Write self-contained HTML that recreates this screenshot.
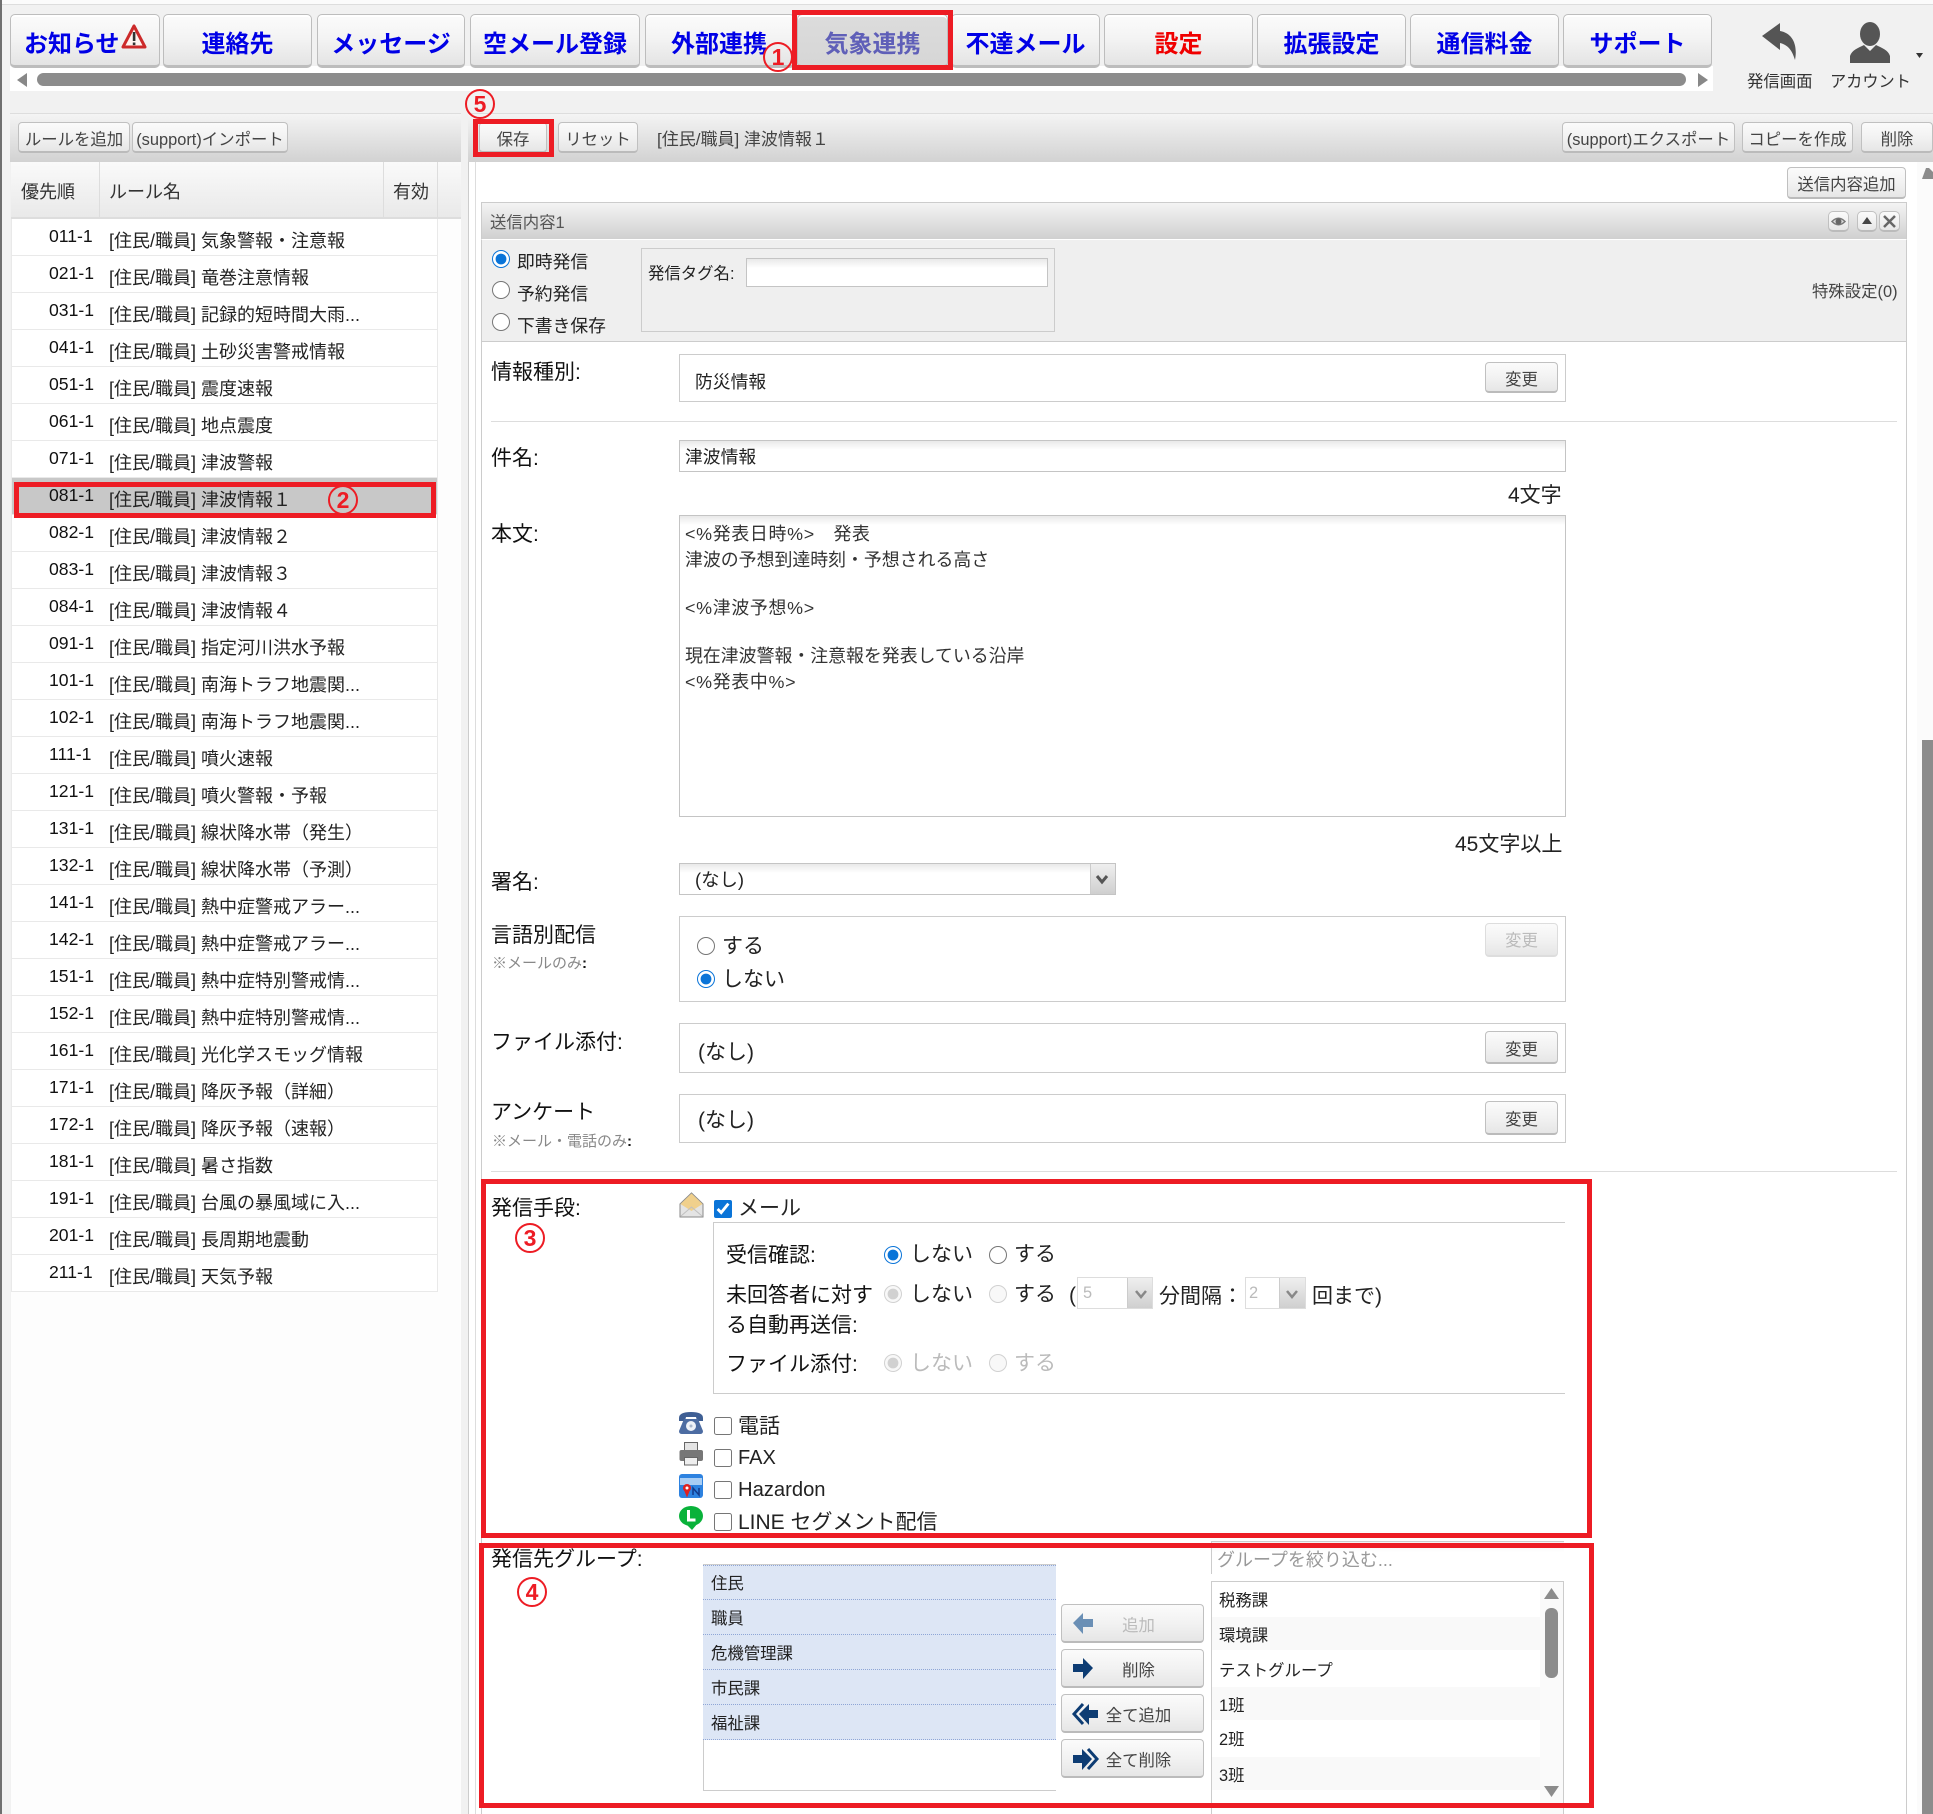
<!DOCTYPE html>
<html lang="ja">
<head>
<meta charset="utf-8">
<title>気象連携</title>
<style>
html,body{margin:0;padding:0;}
body{position:relative;width:1933px;height:1814px;overflow:hidden;background:#f1f1f1;font-family:"Liberation Sans","Noto Sans CJK JP",sans-serif;color:#222;}
div,span,input{box-sizing:border-box;}
.a{position:absolute;}
.t{position:absolute;white-space:nowrap;line-height:1;}
.nav{position:absolute;top:14px;height:54px;border:1px solid #bdbdbd;border-bottom:3px solid #bdbdbd;border-radius:5px;background:linear-gradient(#fbfbfb,#f4f4f4 45%,#e4e4e4);color:#0000e6;font-weight:700;font-size:24px;text-align:center;line-height:59px;white-space:nowrap;box-shadow:inset 0 2px 0 #fff;}
.b{position:absolute;border:1px solid #c0c0c0;border-bottom:2px solid #bbb;border-radius:4px;background:linear-gradient(#fbfbfb,#f2f2f2 50%,#e6e6e6);color:#444;font-size:16.4px;text-align:center;white-space:nowrap;padding-top:2.5px;}
.row{position:absolute;left:11px;width:426px;height:37px;border-bottom:1px solid #e9e9e9;background:#fff;}
.n{position:absolute;left:38px;top:8px;font-size:17.6px;line-height:18px;color:#111;}
.m{position:absolute;left:98px;top:13px;font-size:18px;line-height:18px;white-space:nowrap;color:#222;}
.box{position:absolute;border:1px solid #ccc;background:#fff;}
.inp{position:absolute;border:1px solid #c4c4c4;background:linear-gradient(#e9e9e9,#fff 9px);}
.red{position:absolute;border:5px solid #ed1c24;z-index:5;}
.c{position:absolute;z-index:6;width:30px;height:30px;border:2px solid #ed1c24;border-radius:50%;color:#ed1c24;font-weight:700;font-size:23px;line-height:26px;text-align:center;}
.l{position:absolute;white-space:nowrap;line-height:1;font-size:21px;color:#111;left:491px;}
.s{position:absolute;white-space:nowrap;line-height:1;font-size:15px;color:#888;left:492px;}
.s b{color:#111;}
input{position:absolute;margin:0;width:18px;height:18px;accent-color:#0a74d8;}
.g{position:absolute;left:703px;width:353px;height:35px;background:#dde6f5;border-bottom:1px dotted #8fa6d6;font-size:16.4px;line-height:38px;padding-left:8px;color:#222;}
.gr{position:absolute;left:1212px;width:328px;height:33px;font-size:16.4px;line-height:33px;padding-left:7px;color:#222;white-space:nowrap;}
.dd{position:absolute;top:0;bottom:0;background:linear-gradient(#efefef,#cfcfcf);border-left:1px solid #ccc;}
.k{letter-spacing:.7px;}
</style>
</head>
<body>
<div class="a" style="left:0;top:0;width:1933px;height:5px;background:#fbfbfb;border-bottom:1px solid #ddd"></div>
<div class="a" style="left:0;top:0;width:2px;height:1814px;background:#6f6f6f;z-index:3"></div>

<!-- Nav -->
<div class="a" style="left:10px;top:66px;width:1703px;height:25px;background:#fff"></div>
<div class="a" style="left:37px;top:73px;width:1649px;height:13px;background:#8c8c8c;border-radius:7px"></div>
<div class="nav" style="left:10px;width:150px;text-align:left;padding-left:13px">お知らせ</div>
<div class="nav" style="left:163px;width:149px">連絡先</div>
<div class="nav" style="left:317px;width:148px">メッセージ</div>
<div class="nav" style="left:470px;width:170px">空メール登録</div>
<div class="nav" style="left:645px;width:150px;padding-right:2px">外部連携</div>
<div class="nav" style="left:797px;width:151px;background:linear-gradient(#dcdcdc,#d6d6d6);color:#5f5fb8">気象連携</div>
<div class="nav" style="left:951px;width:149px">不達メール</div>
<div class="nav" style="left:1104px;width:149px;color:#f00000">設定</div>
<div class="nav" style="left:1257px;width:149px">拡張設定</div>
<div class="nav" style="left:1410px;width:149px">通信料金</div>
<div class="nav" style="left:1563px;width:149px">サポート</div>
<div class="t" style="left:1747px;top:74px;font-size:16.4px;color:#333">発信画面</div>
<div class="t" style="left:1830px;top:74px;font-size:16.2px;color:#333">アカウント</div>

<!-- Left toolbar -->
<div class="a" style="left:10px;top:113px;width:451px;height:49px;background:linear-gradient(#f4f4f4,#d2d2d2);border-top:1px solid #ddd"></div>
<div class="b" style="left:18px;top:122px;width:112px;height:31px;line-height:28px">ルールを追加</div>
<div class="b" style="left:132px;top:122px;width:156px;height:31px;line-height:28px">(support)インポート</div>

<!-- Left table -->
<div class="a" style="left:11px;top:162px;width:450px;height:1652px;background:#fdfdfd"></div>
<div class="a" style="left:11px;top:162px;width:450px;height:57px;background:linear-gradient(#fafafa,#e9e9e9);border-bottom:2px solid #ddd"></div>
<div class="a" style="left:99px;top:162px;width:1px;height:57px;background:#ddd"></div>
<div class="a" style="left:383px;top:162px;width:1px;height:57px;background:#ddd"></div>
<div class="a" style="left:437px;top:162px;width:1px;height:57px;background:#ddd"></div>
<div class="t" style="left:21px;top:183px;font-size:18px;color:#333">優先順</div>
<div class="t" style="left:109px;top:183px;font-size:18px;color:#333">ルール名</div>
<div class="t" style="left:393px;top:183px;font-size:18px;color:#333">有効</div>

<div class="row" style="top:219px"><span class="n">011-1</span><span class="m">[住民/職員] 気象警報・注意報</span></div>
<div class="row" style="top:256px"><span class="n">021-1</span><span class="m">[住民/職員] 竜巻注意情報</span></div>
<div class="row" style="top:293px"><span class="n">031-1</span><span class="m">[住民/職員] 記録的短時間大雨...</span></div>
<div class="row" style="top:330px"><span class="n">041-1</span><span class="m">[住民/職員] 土砂災害警戒情報</span></div>
<div class="row" style="top:367px"><span class="n">051-1</span><span class="m">[住民/職員] 震度速報</span></div>
<div class="row" style="top:404px"><span class="n">061-1</span><span class="m">[住民/職員] 地点震度</span></div>
<div class="row" style="top:441px"><span class="n">071-1</span><span class="m">[住民/職員] 津波警報</span></div>
<div class="row" style="top:478px;background:#c8c8c8"><span class="n">081-1</span><span class="m">[住民/職員] 津波情報１</span></div>
<div class="row" style="top:515px"><span class="n">082-1</span><span class="m">[住民/職員] 津波情報２</span></div>
<div class="row" style="top:552px"><span class="n">083-1</span><span class="m">[住民/職員] 津波情報３</span></div>
<div class="row" style="top:589px"><span class="n">084-1</span><span class="m">[住民/職員] 津波情報４</span></div>
<div class="row" style="top:626px"><span class="n">091-1</span><span class="m">[住民/職員] 指定河川洪水予報</span></div>
<div class="row" style="top:663px"><span class="n">101-1</span><span class="m">[住民/職員] 南海トラフ地震関...</span></div>
<div class="row" style="top:700px"><span class="n">102-1</span><span class="m">[住民/職員] 南海トラフ地震関...</span></div>
<div class="row" style="top:737px"><span class="n">111-1</span><span class="m">[住民/職員] 噴火速報</span></div>
<div class="row" style="top:774px"><span class="n">121-1</span><span class="m">[住民/職員] 噴火警報・予報</span></div>
<div class="row" style="top:811px"><span class="n">131-1</span><span class="m">[住民/職員] 線状降水帯（発生）</span></div>
<div class="row" style="top:848px"><span class="n">132-1</span><span class="m">[住民/職員] 線状降水帯（予測）</span></div>
<div class="row" style="top:885px"><span class="n">141-1</span><span class="m">[住民/職員] 熱中症警戒アラー...</span></div>
<div class="row" style="top:922px"><span class="n">142-1</span><span class="m">[住民/職員] 熱中症警戒アラー...</span></div>
<div class="row" style="top:959px"><span class="n">151-1</span><span class="m">[住民/職員] 熱中症特別警戒情...</span></div>
<div class="row" style="top:996px"><span class="n">152-1</span><span class="m">[住民/職員] 熱中症特別警戒情...</span></div>
<div class="row" style="top:1033px"><span class="n">161-1</span><span class="m">[住民/職員] 光化学スモッグ情報</span></div>
<div class="row" style="top:1070px"><span class="n">171-1</span><span class="m">[住民/職員] 降灰予報（詳細）</span></div>
<div class="row" style="top:1107px"><span class="n">172-1</span><span class="m">[住民/職員] 降灰予報（速報）</span></div>
<div class="row" style="top:1144px"><span class="n">181-1</span><span class="m">[住民/職員] 暑さ指数</span></div>
<div class="row" style="top:1181px"><span class="n">191-1</span><span class="m">[住民/職員] 台風の暴風域に入...</span></div>
<div class="row" style="top:1218px"><span class="n">201-1</span><span class="m">[住民/職員] 長周期地震動</span></div>
<div class="row" style="top:1255px"><span class="n">211-1</span><span class="m">[住民/職員] 天気予報</span></div>
<div class="a" style="left:11px;top:219px;width:1px;height:1073px;background:#e9e9e9"></div>
<div class="a" style="left:437px;top:219px;width:1px;height:1073px;background:#e9e9e9"></div>

<!-- Right column -->
<div class="a" style="left:468px;top:113px;width:1465px;height:49px;background:linear-gradient(#f4f4f4,#d2d2d2);border-top:1px solid #ddd"></div>
<div class="a" style="left:468px;top:162px;width:1465px;height:1652px;background:#fff;border-left:1px solid #ccc"></div>
<div class="a" style="left:475px;top:162px;width:1px;height:1652px;background:#ddd"></div>
<div class="a" style="left:1917px;top:162px;width:16px;height:1652px;background:#fbfbfb"></div>
<div class="a" style="left:1922px;top:740px;width:11px;height:1074px;background:#8c8c8c"></div>
<div class="b" style="left:479px;top:122px;width:68px;height:31px;line-height:28px">保存</div>
<div class="b" style="left:558px;top:122px;width:80px;height:31px;line-height:28px">リセット</div>
<div class="t" style="left:657px;top:131px;font-size:17px;color:#444">[住民/職員] 津波情報１</div>
<div class="b" style="left:1562px;top:122px;width:173px;height:31px;line-height:28px">(support)エクスポート</div>
<div class="b" style="left:1742px;top:122px;width:111px;height:31px;line-height:28px">コピーを作成</div>
<div class="b" style="left:1861px;top:122px;width:72px;height:31px;line-height:28px">削除</div>
<div class="b" style="left:1787px;top:167px;width:119px;height:32px;line-height:29px">送信内容追加</div>

<!-- Panel -->
<div class="a" style="left:481px;top:202px;width:1426px;height:1612px;border-left:1px solid #ccc;border-right:1px solid #ccc;background:#fff"></div>
<div class="a" style="left:481px;top:202px;width:1426px;height:38px;background:linear-gradient(#f4f4f4,#d0d0d0);border:1px solid #ccc;border-bottom:1px solid #fff"></div>
<div class="t" style="left:490px;top:215px;font-size:16.4px;color:#555">送信内容1</div>
<div class="a" style="left:481px;top:240px;width:1426px;height:102px;background:#efefef;border:1px solid #ccc;border-top:0"></div>
<div class="b" style="left:1828px;top:211px;width:21px;height:21px;border-radius:5px"></div>
<div class="b" style="left:1857px;top:211px;width:20px;height:21px;border-radius:5px"></div>
<div class="b" style="left:1879px;top:211px;width:21px;height:21px;border-radius:5px"></div>
<input type="radio" name="r1" checked style="left:492px;top:250px">
<input type="radio" name="r1" style="left:492px;top:281px">
<input type="radio" name="r1" style="left:492px;top:313px">
<div class="t" style="left:517px;top:254px;font-size:17.8px;color:#222">即時発信</div>
<div class="t" style="left:517px;top:286px;font-size:17.8px;color:#222">予約発信</div>
<div class="t" style="left:517px;top:318px;font-size:17.8px;color:#222">下書き保存</div>
<div class="a" style="left:641px;top:248px;width:414px;height:84px;border:1px solid #ccc;background:#efefef"></div>
<div class="t" style="left:648px;top:266px;font-size:16.4px;color:#222">発信タグ名:</div>
<div class="inp" style="left:746px;top:258px;width:302px;height:29px"></div>
<div class="t" style="left:1812px;top:284px;font-size:16.4px;color:#444">特殊設定(0)</div>

<div class="l" style="top:362px">情報種別:</div>
<div class="box" style="left:679px;top:354px;width:887px;height:48px"></div>
<div class="t" style="left:695px;top:374px;font-size:17.8px;color:#222">防災情報</div>
<div class="b" style="left:1485px;top:362px;width:73px;height:31px;line-height:28px">変更</div>
<div class="a" style="left:491px;top:421px;width:1406px;height:1px;background:#ddd"></div>

<div class="l" style="top:448px">件名:</div>
<div class="inp" style="left:679px;top:440px;width:887px;height:32px"></div>
<div class="t" style="left:685px;top:449px;font-size:17.8px;color:#222">津波情報</div>
<div class="t" style="left:1508px;top:485px;font-size:21px;color:#222">4文字</div>

<div class="l" style="top:524px">本文:</div>
<div class="inp" style="left:679px;top:515px;width:887px;height:302px"></div>
<div class="t k" style="left:685px;top:526px;font-size:17.9px;color:#333">&lt;%発表日時%&gt;　発表</div>
<div class="t" style="left:685px;top:552px;font-size:17.9px;color:#333">津波の予想到達時刻・予想される高さ</div>
<div class="t k" style="left:685px;top:600px;font-size:17.9px;color:#333">&lt;%津波予想%&gt;</div>
<div class="t" style="left:685px;top:648px;font-size:17.9px;color:#333">現在津波警報・注意報を発表している沿岸</div>
<div class="t k" style="left:685px;top:674px;font-size:17.9px;color:#333">&lt;%発表中%&gt;</div>
<div class="t" style="left:1455px;top:834px;font-size:21px;color:#222">45文字以上</div>

<div class="l" style="top:872px">署名:</div>
<div class="inp" style="left:679px;top:863px;width:437px;height:32px"><div class="dd" style="right:0;width:25px"></div></div>
<div class="t" style="left:695px;top:871px;font-size:18.4px;color:#222">(なし)</div>

<div class="l" style="top:925px">言語別配信</div>
<div class="s" style="top:956px">※メールのみ<b>:</b></div>
<div class="box" style="left:679px;top:916px;width:887px;height:86px"></div>
<input type="radio" name="r2" style="left:697px;top:937px">
<input type="radio" name="r2" checked style="left:697px;top:970px">
<div class="t" style="left:722px;top:936px;font-size:21px;color:#222">する</div>
<div class="t" style="left:722px;top:969px;font-size:21px;color:#222">しない</div>
<div class="b" style="left:1485px;top:923px;width:73px;height:34px;line-height:28px;color:#bbb;border-color:#ddd">変更</div>

<div class="l" style="top:1032px">ファイル添付:</div>
<div class="box" style="left:679px;top:1023px;width:887px;height:50px"></div>
<div class="t" style="left:698px;top:1042px;font-size:21px;color:#222">(なし)</div>
<div class="b" style="left:1485px;top:1031px;width:73px;height:33px;line-height:30px">変更</div>

<div class="l" style="top:1102px">アンケート</div>
<div class="s" style="top:1134px">※メール・電話のみ<b>:</b></div>
<div class="box" style="left:679px;top:1094px;width:887px;height:49px"></div>
<div class="t" style="left:698px;top:1110px;font-size:21px;color:#222">(なし)</div>
<div class="b" style="left:1485px;top:1101px;width:73px;height:34px;line-height:31px">変更</div>
<div class="a" style="left:491px;top:1171px;width:1406px;height:1px;background:#ddd"></div>

<!-- Send methods -->
<div class="l" style="top:1198px">発信手段:</div>
<input type="checkbox" checked style="left:714px;top:1200px">
<div class="t" style="left:738px;top:1198px;font-size:21px;color:#222">メール</div>
<div class="a" style="left:713px;top:1222px;width:852px;height:172px;border:1px solid #ccc;border-right:0"></div>
<div class="t" style="left:726px;top:1245px;font-size:21px;color:#111">受信確認:</div>
<input type="radio" name="r3" checked style="left:884px;top:1246px">
<div class="t" style="left:910px;top:1244px;font-size:21px;color:#222">しない</div>
<input type="radio" name="r3" style="left:989px;top:1246px">
<div class="t" style="left:1014px;top:1244px;font-size:21px;color:#222">する</div>
<div class="t" style="left:726px;top:1285px;font-size:21px;color:#111">未回答者に対す</div>
<div class="t" style="left:726px;top:1315px;font-size:21px;color:#111">る自動再送信:</div>
<input type="radio" name="r4" checked disabled style="left:884px;top:1285px">
<div class="t" style="left:910px;top:1284px;font-size:21px;color:#222">しない</div>
<input type="radio" name="r4" disabled style="left:989px;top:1285px">
<div class="t" style="left:1014px;top:1284px;font-size:21px;color:#222">する</div>
<div class="t" style="left:1069px;top:1285px;font-size:21px;color:#222">(</div>
<div class="inp" style="left:1077px;top:1277px;width:76px;height:32px;border-color:#ddd;background:#fff"><div class="dd" style="right:0;width:25px"></div></div>
<div class="t" style="left:1083px;top:1285px;font-size:16.4px;color:#bbb">5</div>
<div class="t" style="left:1159px;top:1286px;font-size:21px;color:#222">分間隔：</div>
<div class="inp" style="left:1245px;top:1277px;width:61px;height:32px;border-color:#ddd;background:#fff"><div class="dd" style="right:0;width:26px"></div></div>
<div class="t" style="left:1249px;top:1285px;font-size:16.4px;color:#bbb">2</div>
<div class="t" style="left:1312px;top:1286px;font-size:21px;color:#222">回まで)</div>
<div class="t" style="left:726px;top:1354px;font-size:21px;color:#111">ファイル添付:</div>
<input type="radio" name="r5" checked disabled style="left:884px;top:1354px">
<div class="t" style="left:910px;top:1353px;font-size:21px;color:#bbb">しない</div>
<input type="radio" name="r5" disabled style="left:989px;top:1354px">
<div class="t" style="left:1014px;top:1353px;font-size:21px;color:#bbb">する</div>

<input type="checkbox" style="left:714px;top:1417px">
<div class="t" style="left:738px;top:1416px;font-size:21px;color:#222">電話</div>
<input type="checkbox" style="left:714px;top:1449px">
<div class="t" style="left:738px;top:1448px;font-size:20px;color:#222">FAX</div>
<input type="checkbox" style="left:714px;top:1481px">
<div class="t" style="left:738px;top:1480px;font-size:20.200px;color:#222">Hazardon</div>
<input type="checkbox" style="left:714px;top:1513px">
<div class="t" style="left:738px;top:1512px;font-size:21px;color:#222">LINE セグメント配信</div>

<!-- Groups -->
<div class="l" style="top:1549px">発信先グループ:</div>
<div class="a" style="left:703px;top:1564px;width:353px;height:227px;border:1px solid #ccc;border-right:0"></div>
<div class="g" style="top:1565px;border-top:1px dotted #8fa6d6;line-height:36px">住民</div>
<div class="g" style="top:1600px">職員</div>
<div class="g" style="top:1635px">危機管理課</div>
<div class="g" style="top:1670px">市民課</div>
<div class="g" style="top:1705px">福祉課</div>
<div class="b" style="left:1061px;top:1604px;width:143px;height:39px;line-height:36px;color:#bbb;padding-left:12px">追加</div>
<div class="b" style="left:1061px;top:1649px;width:143px;height:39px;line-height:36px;padding-left:12px">削除</div>
<div class="b" style="left:1061px;top:1694px;width:143px;height:39px;line-height:36px;padding-left:12px">全て追加</div>
<div class="b" style="left:1061px;top:1739px;width:143px;height:39px;line-height:36px;padding-left:12px">全て削除</div>
<div class="a" style="left:1211px;top:1541px;width:353px;height:33px;border-top:1px solid #ccc;border-left:1px solid #ccc;background:linear-gradient(#f2f2f2,#fff 10px)"></div>
<div class="t" style="left:1217px;top:1551px;font-size:18px;color:#999">グループを絞り込む...</div>
<div class="a" style="left:1211px;top:1581px;width:353px;height:233px;border:1px solid #ccc;border-bottom:0;background:#fff"></div>
<div class="a" style="left:1540px;top:1582px;width:23px;height:232px;background:#fafafa"></div>
<div class="gr" style="top:1585px">税務課</div>
<div class="gr" style="top:1617px;background:#f9f9f9;line-height:38px">環境課</div>
<div class="gr" style="top:1655px">テストグループ</div>
<div class="gr" style="top:1687px;background:#f9f9f9;line-height:38px">1班</div>
<div class="gr" style="top:1724px">2班</div>
<div class="gr" style="top:1757px;background:#f9f9f9;line-height:38px">3班</div>
<div class="a" style="left:1545px;top:1608px;width:13px;height:70px;background:#8c8c8c;border-radius:6px"></div>

<!-- Icons -->
<svg class="a" style="left:0;top:0;z-index:4" width="1933" height="1814" viewBox="0 0 1933 1814">
<polygon points="27,73 27,87 17,80" fill="#888"/>
<polygon points="1698,73 1698,87 1708,80" fill="#888"/>
<path d="M1762 36 L1780 23 L1780 31 C1792 33 1798 44 1795 60 C1792 50 1788 45 1780 43 L1780 50 Z" fill="#555"/>
<ellipse cx="1870" cy="34" rx="10" ry="12" fill="#555"/>
<path d="M1850 63 L1850 56 C1852 50 1858 48 1864 45 L1870 51 L1876 45 C1882 48 1888 50 1890 56 L1890 63 Z" fill="#555"/>
<polygon points="1916,53 1923,53 1919.5,58" fill="#333"/>
<polygon points="134,26 123,47 145,47" fill="#fff4f0" stroke="#cc2a2a" stroke-width="3" stroke-linejoin="round"/>
<rect x="132.8" y="32" width="2.6" height="9" fill="#333"/><rect x="132.8" y="42.5" width="2.6" height="2.6" fill="#333"/>
<path d="M1832 221.5 Q1838.500 215 1845 221.500 Q1838.500 228 1832 221.500 Z" fill="#ddd" stroke="#777" stroke-width="1.500"/><circle cx="1838.500" cy="221.500" r="3" fill="#666"/>
<polygon points="1867,217 1872,224 1862,224" fill="#444"/>
<path d="M1884 216 L1895 227 M1895 216 L1884 227" stroke="#666" stroke-width="2.500"/>
<path d="M1097 876 L1102 882 L1107 876" fill="none" stroke="#555" stroke-width="3"/>
<path d="M1136 1291 L1141 1297 L1146 1291" fill="none" stroke="#888" stroke-width="2.500"/>
<path d="M1287 1291 L1292 1297 L1297 1291" fill="none" stroke="#888" stroke-width="2.500"/>
<!-- mail -->
<path d="M680 1204 L691.500 1193 L703 1204 L703 1217 L680 1217 Z" fill="#e4e4e4" stroke="#8a8a8a"/>
<path d="M680.500 1204 L691.500 1193.500 L702.500 1204 L691.500 1211 Z" fill="#f0d08c"/>
<path d="M681 1216 L691.500 1207 L702 1216" fill="none" stroke="#c0c0c0"/>
<!-- phone -->
<path d="M679 1418 Q679 1412 691 1412 Q703 1412 703 1418 L703 1421 L697 1421 L696 1417 L686 1417 L685 1421 L679 1421 Z" fill="#3f5f94"/>
<path d="M684 1419 L698 1419 L703 1431 Q703 1434 700 1434 L682 1434 Q679 1434 679 1431 Z" fill="#4c6ca2"/>
<circle cx="691" cy="1426" r="5" fill="#eef2f8"/><circle cx="691" cy="1426" r="1.500" fill="#aab8cc"/>
<!-- printer -->
<rect x="684.500" y="1442.500" width="13" height="9" fill="#e4e4e4" stroke="#666"/>
<rect x="679.500" y="1450" width="23.500" height="11" rx="2" fill="#777"/>
<rect x="684.500" y="1457.500" width="13" height="7.500" fill="#eee" stroke="#666"/>
<!-- hazardon -->
<rect x="679" y="1474" width="24" height="24" rx="3" fill="#2d82e0"/>
<rect x="680" y="1478" width="22" height="7" fill="#a8cdf4"/>
<circle cx="687" cy="1488" r="4" fill="#e02020"/><path d="M684 1490 L687 1497.500 L690 1490 Z" fill="#e02020"/><circle cx="687" cy="1488" r="1.500" fill="#fff"/>
<path d="M693 1495 L693 1488 L699 1495 L699 1488" fill="none" stroke="#123a8c" stroke-width="1.500"/>
<!-- line -->
<ellipse cx="691" cy="1516" rx="12" ry="10" fill="#09b23a"/><path d="M685 1523 L692 1530 L698 1523 Z" fill="#09b23a"/>
<path d="M688.500 1510 L688.500 1520 L695.500 1520" fill="none" stroke="#fff" stroke-width="3"/>
<!-- transfer arrows -->
<polygon points="1073,1623 1083,1613 1083,1619 1093,1619 1093,1627 1083,1627 1083,1634" fill="#6a8fb5"/>
<polygon points="1093,1668 1083,1658 1083,1664 1073,1664 1073,1672 1083,1672 1083,1679" fill="#0d3c73"/>
<polygon points="1079,1714 1089,1704 1089,1710 1098,1710 1098,1718 1089,1718 1089,1725" fill="#0d3c73"/>
<path d="M1083 1704 L1074 1714 L1083 1724" fill="none" stroke="#0d3c73" stroke-width="3"/>
<polygon points="1092,1759 1082,1749 1082,1755 1073,1755 1073,1763 1082,1763 1082,1770" fill="#0d3c73"/>
<path d="M1088 1749 L1097 1759 L1088 1769" fill="none" stroke="#0d3c73" stroke-width="3"/>
<!-- scroll arrows -->
<polygon points="1922,179 1933,179 1933,172 1929,168 1926,168" fill="#8c8c8c"/>
<polygon points="1551.500,1588 1559,1599 1544,1599" fill="#8c8c8c"/>
<polygon points="1551.500,1797 1559,1786 1544,1786" fill="#8c8c8c"/>
</svg>

<!-- Annotations -->
<div class="red" style="left:792px;top:10px;width:161px;height:60px"></div>
<div class="red" style="left:473px;top:119px;width:81px;height:38px"></div>
<div class="red" style="left:14px;top:482px;width:422px;height:36px"></div>
<div class="red" style="left:481px;top:1179px;width:1111px;height:359px"></div>
<div class="red" style="left:479px;top:1543px;width:1115px;height:265px"></div>
<div class="c" style="left:763px;top:42px">1</div>
<div class="c" style="left:465px;top:89px">5</div>
<div class="c" style="left:328px;top:485px">2</div>
<div class="c" style="left:515px;top:1223px">3</div>
<div class="c" style="left:517px;top:1577px">4</div>
</body>
</html>
